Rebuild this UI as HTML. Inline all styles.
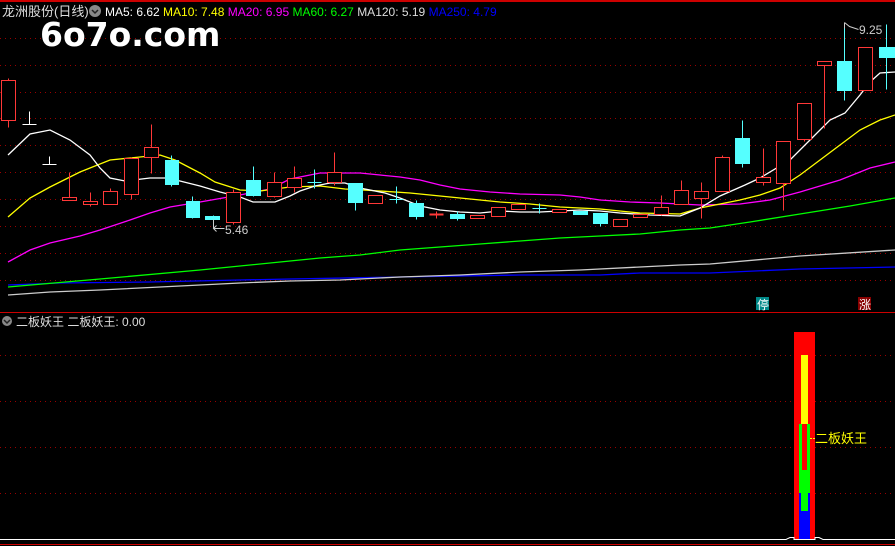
<!DOCTYPE html><html><head><meta charset="utf-8"><style>
body{margin:0;background:#000;width:895px;height:546px;overflow:hidden;font-family:"Liberation Sans","Noto Sans CJK SC",sans-serif}
</style></head><body>
<svg width="895" height="546" xmlns="http://www.w3.org/2000/svg" style="position:absolute;left:0;top:0">
<rect width="895" height="546" fill="#000"/>
<line x1="0" y1="1" x2="895" y2="1" stroke="#c00" stroke-width="2"/>
<g stroke="#900" stroke-dasharray="1,4" transform="translate(0,0.5)">
<line x1="0" y1="38" x2="895" y2="38"/><line x1="0" y1="65" x2="895" y2="65"/><line x1="0" y1="92" x2="895" y2="92"/><line x1="0" y1="118" x2="895" y2="118"/><line x1="0" y1="145" x2="895" y2="145"/><line x1="0" y1="172" x2="895" y2="172"/><line x1="0" y1="199" x2="895" y2="199"/><line x1="0" y1="226" x2="895" y2="226"/><line x1="0" y1="253" x2="895" y2="253"/><line x1="0" y1="280" x2="895" y2="280"/>
<line x1="0" y1="355" x2="895" y2="355"/><line x1="0" y1="401" x2="895" y2="401"/><line x1="0" y1="447" x2="895" y2="447"/><line x1="0" y1="493" x2="895" y2="493"/>
</g>
<line x1="0" y1="312.5" x2="895" y2="312.5" stroke="#c00"/>
<line x1="0" y1="544.5" x2="895" y2="544.5" stroke="#c00"/>
<g fill="none" stroke-width="1.3">
<polyline stroke="#0000ff" points="8,285 60,283 150,282 240,280 290,279 400,277 520,275 600,275 640,273 710,273 800,269 895,267"/>
<polyline stroke="#ccc" points="8,295 50,292 100,290 160,287 240,283 290,281 340,280 400,277 460,275 520,272 580,270 640,267 680,265 710,264 800,256 895,250"/>
<polyline stroke="#0f0" points="8,287 100,279 200,270 290,261 320,258 360,255 400,250 440,247 480,244 520,241 560,238 600,236 640,234 680,230 710,228 750,222 800,214 850,206 895,198"/>
<polyline stroke="#f0f" points="8,262 30,250 50,243 80,236 100,230 130,220 150,213 170,207 200,202 240,195 270,189 290,179 310,175 320,173 360,173 380,175 400,177 420,180 440,185 460,189 490,192 520,194 560,195 580,197 600,200 630,202 660,203 700,205 740,204 770,200 800,192 840,180 870,168 895,162"/>
<polyline stroke="#ff0" points="8,217 30,198 50,187 80,172 110,160 130,158 160,155 175,160 200,173 215,182 240,190 260,191 290,187 320,186 345,189 380,191 410,193 440,196 470,199 500,202 530,204 560,207 600,209 640,213 680,214 700,208 740,200 760,195 780,188 800,175 820,160 840,145 860,130 880,120 895,115"/>
<polyline stroke="#fff" points="8,155 30,134 50,130 70,140 90,155 100,168 110,178 125,181 150,178 165,178 180,181 200,186 220,192 240,197 253,202 275,202 290,196 300,191 315,186 330,183 345,183 360,188 370,190 385,193 400,198 420,206 440,210 460,212 480,213 500,211 520,212 540,212 560,211 580,210 600,211 620,213 650,215 680,216 700,208 720,196 745,185 760,178 790,160 810,140 830,120 845,113 860,95 870,82 880,73 895,72"/>
</g>
<g transform="translate(0.5,0.5)">
<g stroke="#ff3838" fill="none">
<line x1="8" y1="78" x2="8" y2="127"/><rect x="1" y="80" width="14" height="40" fill="#000"/>
<line x1="69" y1="172" x2="69" y2="200"/><rect x="62" y="197" width="14" height="3" fill="#000"/>
<line x1="90" y1="192" x2="90" y2="206"/><rect x="83" y="201" width="14" height="3" fill="#000"/>
<line x1="110" y1="188" x2="110" y2="191"/><rect x="103" y="191" width="14" height="13" fill="#000"/>
<line x1="131" y1="157" x2="131" y2="199"/><rect x="124" y="158" width="14" height="36" fill="#000"/>
<line x1="151" y1="124" x2="151" y2="173"/><rect x="144" y="147" width="14" height="10" fill="#000"/>
<line x1="233" y1="189" x2="233" y2="224"/><rect x="226" y="192" width="14" height="30" fill="#000"/>
<line x1="274" y1="172" x2="274" y2="197"/><rect x="267" y="182" width="14" height="14" fill="#000"/>
<line x1="294" y1="166" x2="294" y2="192"/><rect x="287" y="178" width="14" height="9" fill="#000"/>
<line x1="334" y1="152" x2="334" y2="185"/><rect x="327" y="172" width="14" height="10" fill="#000"/>
<rect x="368" y="195" width="14" height="8" fill="#000"/>
<line x1="436" y1="211" x2="436" y2="218"/><line x1="429" y1="214" x2="443" y2="214" stroke-width="2"/>
<rect x="470" y="215" width="14" height="3" fill="#000"/>
<rect x="491" y="207" width="14" height="9" fill="#000"/>
<rect x="511" y="204" width="14" height="5" fill="#000"/>
<rect x="552" y="209" width="14" height="3" fill="#000"/>
<rect x="613" y="219" width="14" height="7" fill="#000"/>
<rect x="633" y="214" width="14" height="3" fill="#000"/>
<line x1="661" y1="195" x2="661" y2="215"/><rect x="654" y="207" width="14" height="7" fill="#000"/>
<line x1="681" y1="180" x2="681" y2="190"/><rect x="674" y="190" width="14" height="14" fill="#000"/>
<line x1="701" y1="182" x2="701" y2="218"/><rect x="694" y="191" width="14" height="7" fill="#000"/>
<line x1="722" y1="155" x2="722" y2="157"/><rect x="715" y="157" width="14" height="34" fill="#000"/>
<line x1="763" y1="148" x2="763" y2="185"/><rect x="756" y="177" width="14" height="5" fill="#000"/>
<line x1="783" y1="183" x2="783" y2="210"/><rect x="776" y="141" width="14" height="42" fill="#000"/>
<line x1="804" y1="139" x2="804" y2="141"/><rect x="797" y="103" width="14" height="36" fill="#000"/>
<line x1="824" y1="65" x2="824" y2="128"/><rect x="817" y="61" width="14" height="4" fill="#000"/>
<rect x="858" y="47" width="14" height="43" fill="#000"/>
</g>
<g stroke="#fff" fill="none"><line x1="29" y1="111" x2="29" y2="124"/><line x1="22" y1="124" x2="36" y2="124"/><line x1="49" y1="156" x2="49" y2="164"/><line x1="42" y1="164" x2="56" y2="164"/></g>
<g stroke="#55ffff" fill="none"><line x1="314" y1="169" x2="314" y2="188"/><line x1="307" y1="182" x2="321" y2="182"/><line x1="396" y1="186" x2="396" y2="203"/><line x1="389" y1="199" x2="403" y2="199"/><line x1="539" y1="203" x2="539" y2="213"/><line x1="532" y1="208" x2="546" y2="208"/></g>
<g fill="#55ffff" stroke="#55ffff">
<line x1="171" y1="155" x2="171" y2="186"/><rect x="165" y="160" width="13" height="24"/>
<line x1="192" y1="196" x2="192" y2="218"/><rect x="186" y="201" width="13" height="16"/>
<line x1="213" y1="215" x2="213" y2="222"/><rect x="205" y="216" width="14" height="3"/>
<line x1="253" y1="166" x2="253" y2="196"/><rect x="246" y="180" width="14" height="15"/>
<line x1="355" y1="183" x2="355" y2="210"/><rect x="348" y="183" width="14" height="19"/>
<line x1="416" y1="200" x2="416" y2="219"/><rect x="409" y="203" width="14" height="13"/>
<line x1="457" y1="211" x2="457" y2="220"/><rect x="450" y="214" width="14" height="4"/>
<rect x="573" y="211" width="14" height="3"/>
<line x1="600" y1="213" x2="600" y2="226"/><rect x="593" y="213" width="14" height="10"/>
<line x1="742" y1="120" x2="742" y2="167"/><rect x="735" y="138" width="14" height="25"/>
<line x1="844" y1="24" x2="844" y2="100"/><rect x="837" y="61" width="14" height="29"/>
<line x1="886" y1="24" x2="886" y2="89"/><rect x="879" y="47" width="16" height="10"/>
</g>
<g fill="none" stroke="#ccc"><line x1="213" y1="219" x2="213" y2="228"/><line x1="213" y1="228" x2="224" y2="228"/><polyline points="216,225 213,228 216,231"/><line x1="844" y1="22" x2="844" y2="28"/><polyline points="844,22 849,26 858,29"/></g>
</g>
<text x="225" y="234" fill="#ccc" font-size="12">5.46</text>
<text x="859" y="34" fill="#ccc" font-size="12">9.25</text>
<rect x="756" y="297" width="13" height="13" fill="#088"/><text x="757" y="309" fill="#fff" font-size="12">停</text>
<rect x="858" y="297" width="13" height="13" fill="#800"/><text x="859" y="309" fill="#fff" font-size="12">涨</text>
<rect x="794" y="332" width="21" height="208" fill="#f00"/>
<rect x="801" y="355" width="7" height="69" fill="#ff0"/>
<rect x="799" y="424" width="11" height="69" fill="#0f0"/>
<rect x="802" y="424" width="5" height="46" fill="#f00"/>
<rect x="799" y="493" width="11" height="47" fill="#00f"/>
<rect x="801" y="493" width="7" height="18" fill="#0f0"/>
<polyline fill="none" stroke="#fff" points="0,539.5 786,539.5 790,537.5 794,537.5 794,539.5 815,539.5 815,537.5 819,537.5 823,539.5 895,539.5"/>
<line x1="810" y1="438.5" x2="815" y2="438.5" stroke="#ff0" stroke-dasharray="2,1"/>
<text x="815" y="443" fill="#ff0" font-size="13">二板妖王</text>
<text x="2" y="16" fill="#ddd" font-size="13">龙洲股份(日线)</text>
<circle cx="95" cy="11" r="6" fill="#888"/><polyline points="92,10 95,13 98,10" fill="none" stroke="#222" stroke-width="1.5"/>
<text x="105" y="16" font-size="12"><tspan fill="#fff">MA5: 6.62 </tspan><tspan fill="#ff0">MA10: 7.48 </tspan><tspan fill="#f0f">MA20: 6.95 </tspan><tspan fill="#0f0">MA60: 6.27 </tspan><tspan fill="#ddd">MA120: 5.19 </tspan><tspan fill="#00f">MA250: 4.79</tspan></text>
<text x="40" y="46" fill="#fff" font-size="33" font-weight="bold" font-family="'DejaVu Sans',sans-serif">6o7o.com</text>
<circle cx="7" cy="321" r="5" fill="#888"/><polyline points="4,320 7,323 10,320" fill="none" stroke="#222" stroke-width="1.5"/>
<text x="16" y="326" fill="#ddd" font-size="12">二板妖王  二板妖王: 0.00</text>
</svg>
</body></html>
